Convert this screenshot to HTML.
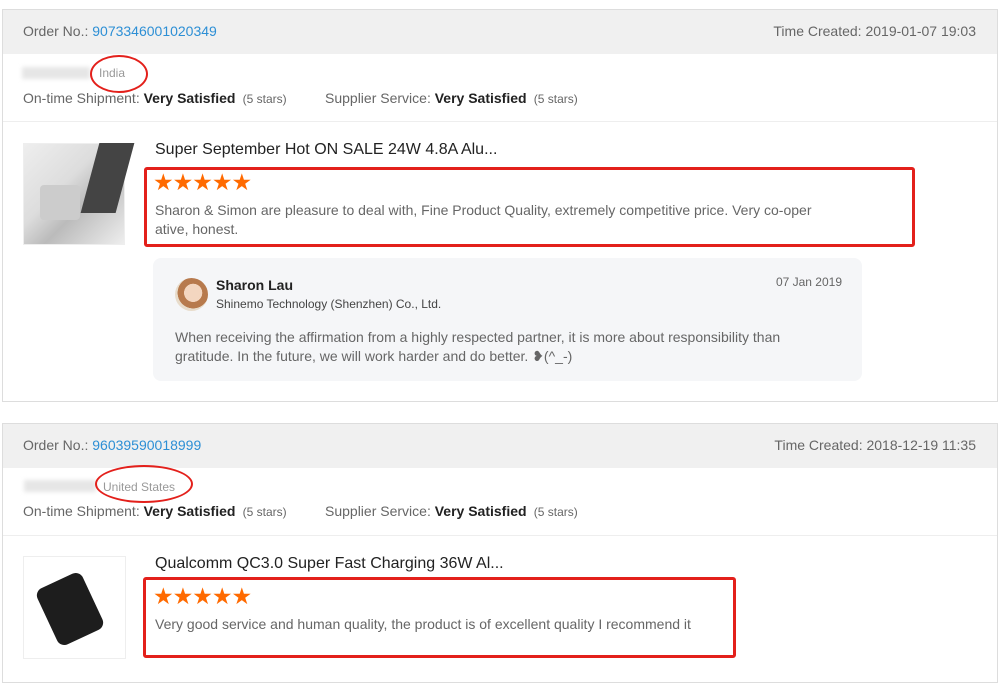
<!DOCTYPE html>
<html><head><meta charset="utf-8"><style>
*{margin:0;padding:0;box-sizing:border-box}
body{width:1000px;height:669px;background:#fff;font-family:"Liberation Sans",sans-serif;color:#333;position:relative;overflow:hidden}
.a{position:absolute;white-space:nowrap}
.card{position:absolute;left:2px;width:996px;border:1px solid #ddd;background:#fff}
.hd{position:absolute;left:0;top:0;width:100%;height:44px;background:#f0f0f0}
.g{color:#666}
.blue{color:#2d8fd5}
.b{font-weight:bold;color:#222}
.red{position:absolute;border:3px solid #e3201b;border-radius:3px}
.ell{position:absolute;border:2.5px solid #e3201b;border-radius:50%}
.stars{color:#ff6a00;font-size:23px;letter-spacing:-1px;line-height:24px}
.blur{position:absolute;background:#e6e6e6;filter:blur(2px)}
</style></head><body>

<div class="card" style="top:9px;height:393px">
  <div class="hd"></div>
</div>
<div class="a" style="left:23px;top:23px;font-size:14px"><span class="g">Order No.:</span> <span class="blue">9073346001020349</span></div>
<div class="a g" style="right:24px;top:23px;font-size:14px">Time Created: 2019-01-07 19:03</div>
<div class="blur" style="left:22px;top:67px;width:68px;height:12px"></div>
<div class="a" style="left:99px;top:66px;font-size:12px;color:#999">India</div>
<div class="ell" style="left:90px;top:55px;width:58px;height:38px"></div>
<div class="a" style="left:23px;top:90px;font-size:14px"><span class="g">On-time Shipment:</span> <span class="b">Very Satisfied</span> <span class="g" style="font-size:12px">&nbsp;(5 stars)</span></div>
<div class="a" style="left:325px;top:90px;font-size:14px"><span class="g">Supplier Service:</span> <span class="b">Very Satisfied</span> <span class="g" style="font-size:12px">&nbsp;(5 stars)</span></div>
<div class="a" style="left:3px;top:121px;width:994px;height:1px;background:#eee"></div>
<div class="a" style="left:23px;top:143px;width:102px;height:102px;background:linear-gradient(135deg,#eee 0%,#ddd 40%,#bbb 60%,#eee 100%);border:1px solid #eee"></div>
<div class="a" style="left:90px;top:143px;width:35px;height:70px;background:#444;transform:skewX(-15deg)"></div>
<div class="a" style="left:40px;top:185px;width:40px;height:35px;background:#ccc;border-radius:4px"></div>
<div class="a" style="left:155px;top:141px;font-size:16px;color:#222">Super September Hot ON SALE 24W 4.8A Alu...</div>
<div class="red" style="left:144px;top:167px;width:771px;height:80px"></div>
<div class="a stars" style="left:153px;top:170px">★★★★★</div>
<div class="a g" style="left:155px;top:201px;font-size:14px;line-height:19px;white-space:normal;width:680px">Sharon &amp; Simon are pleasure to deal with, Fine Product Quality, extremely competitive price. Very co-oper ative, honest.</div>
<div class="a" style="left:153px;top:258px;width:709px;height:123px;background:#f5f6f8;border-radius:8px"></div>
<div class="a" style="left:175px;top:278px;width:33px;height:33px;border-radius:50%;background:radial-gradient(circle at 55% 45%,#f3d6c0 0 35%,#b77a4d 36% 60%,#e8dccb 61%)"></div>
<div class="a b" style="left:216px;top:277px;font-size:14px">Sharon Lau</div>
<div class="a" style="left:216px;top:297px;font-size:12px;color:#444">Shinemo Technology (Shenzhen) Co., Ltd.</div>
<div class="a g" style="right:158px;top:275px;font-size:12px">07 Jan 2019</div>
<div class="a g" style="left:175px;top:328px;font-size:14px;line-height:19px;white-space:normal;width:660px">When receiving the affirmation from a highly respected partner, it is more about responsibility than gratitude. In the future, we will work harder and do better. ❥(^_-)</div>

<div class="card" style="top:423px;height:260px">
  <div class="hd"></div>
</div>
<div class="a" style="left:23px;top:437px;font-size:14px"><span class="g">Order No.:</span> <span class="blue">96039590018999</span></div>
<div class="a g" style="right:24px;top:437px;font-size:14px">Time Created: 2018-12-19 11:35</div>
<div class="blur" style="left:24px;top:480px;width:72px;height:12px"></div>
<div class="a" style="left:103px;top:480px;font-size:12px;color:#999">United States</div>
<div class="ell" style="left:95px;top:465px;width:98px;height:38px"></div>
<div class="a" style="left:23px;top:503px;font-size:14px"><span class="g">On-time Shipment:</span> <span class="b">Very Satisfied</span> <span class="g" style="font-size:12px">&nbsp;(5 stars)</span></div>
<div class="a" style="left:325px;top:503px;font-size:14px"><span class="g">Supplier Service:</span> <span class="b">Very Satisfied</span> <span class="g" style="font-size:12px">&nbsp;(5 stars)</span></div>
<div class="a" style="left:3px;top:535px;width:994px;height:1px;background:#eee"></div>
<div class="a" style="left:23px;top:556px;width:103px;height:103px;border:1px solid #eee;background:#fff"></div>
<div class="a" style="left:45px;top:578px;width:50px;height:62px;background:#1d1d1d;border-radius:8px;transform:rotate(-25deg)"></div>
<div class="a" style="left:155px;top:555px;font-size:16px;color:#222">Qualcomm QC3.0 Super Fast Charging 36W Al...</div>
<div class="red" style="left:143px;top:577px;width:593px;height:81px"></div>
<div class="a stars" style="left:153px;top:584px">★★★★★</div>
<div class="a g" style="left:155px;top:616px;font-size:14px">Very good service and human quality, the product is of excellent quality I recommend it</div>
</body></html>
